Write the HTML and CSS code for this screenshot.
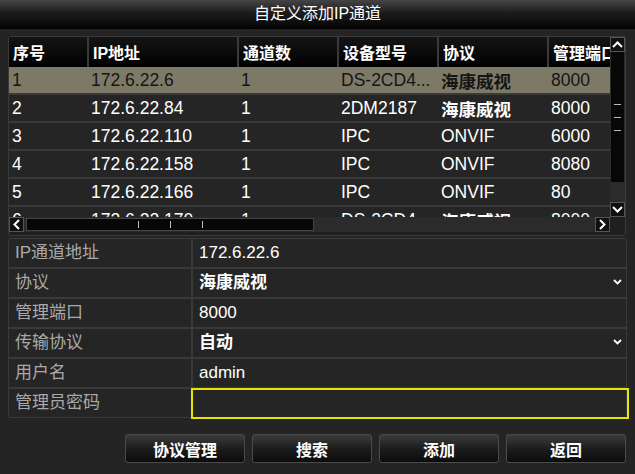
FILE: index.html
```html
<!DOCTYPE html>
<html lang="zh-CN">
<head>
<meta charset="UTF-8">
<title>自定义添加IP通道</title>
<link rel="stylesheet" href="styles.css">
</head>
<body>
<div class="dialog">
    <div class="titlebar">自定义添加IP通道</div>

    <!-- 搜索到的设备列表 -->
    <div class="grid-frame">
        <div class="grid-main">
            <div class="grid-view">
                <table class="grid">
                    <colgroup>
                        <col style="width:78px"><col style="width:150px"><col style="width:100px">
                        <col style="width:100px"><col style="width:110px"><col style="width:63px">
                    </colgroup>
                    <thead>
                        <tr><th>序号</th><th>IP地址</th><th>通道数</th><th>设备型号</th><th>协议</th><th>管理端口</th></tr>
                    </thead>
                    <tbody>
                        <tr class="selected"><td>1</td><td>172.6.22.6</td><td>1</td><td>DS-2CD4...</td><td class="bold">海康威视</td><td>8000</td></tr>
                        <tr><td>2</td><td>172.6.22.84</td><td>1</td><td>2DM2187</td><td class="bold">海康威视</td><td>8000</td></tr>
                        <tr><td>3</td><td>172.6.22.110</td><td>1</td><td>IPC</td><td>ONVIF</td><td>6000</td></tr>
                        <tr><td>4</td><td>172.6.22.158</td><td>1</td><td>IPC</td><td>ONVIF</td><td>8080</td></tr>
                        <tr><td>5</td><td>172.6.22.166</td><td>1</td><td>IPC</td><td>ONVIF</td><td>80</td></tr>
                        <tr><td>6</td><td>172.6.22.170</td><td>1</td><td>DS-2CD4...</td><td class="bold">海康威视</td><td>8000</td></tr>
                    </tbody>
                </table>
            </div>
            <div class="vscroll">
                <div class="sbtn">
                    <svg width="11" height="7" viewBox="0 0 11 7"><polyline points="1,6 5.5,1.5 10,6" fill="none" stroke="#fff" stroke-width="2"/></svg>
                </div>
                <div class="vtrack">
                    <div class="vthumb"><i></i><i></i><i></i></div>
                </div>
                <div class="sbtn">
                    <svg width="11" height="7" viewBox="0 0 11 7"><polyline points="1,1 5.5,5.5 10,1" fill="none" stroke="#fff" stroke-width="2"/></svg>
                </div>
            </div>
        </div>
        <div class="hscroll">
            <div class="sbtn">
                <svg width="7" height="11" viewBox="0 0 7 11"><polyline points="6,1 1.5,5.5 6,10" fill="none" stroke="#fff" stroke-width="2"/></svg>
            </div>
            <div class="htrack">
                <div class="hthumb"><i></i><i></i><i></i></div>
            </div>
            <div class="sbtn">
                <svg width="7" height="11" viewBox="0 0 7 11"><polyline points="1,1 5.5,5.5 1,10" fill="none" stroke="#fff" stroke-width="2"/></svg>
            </div>
        </div>
    </div>

    <!-- 通道参数 -->
    <div class="form">
        <div class="row"><div class="label">IP通道地址</div><div class="value">172.6.22.6</div></div>
        <div class="row"><div class="label">协议</div><div class="value bold">海康威视<span class="drop"><svg width="9" height="6" viewBox="0 0 9 6"><polyline points="1,1 4.5,4.5 8,1" fill="none" stroke="#fff" stroke-width="1.8"/></svg></span></div></div>
        <div class="row"><div class="label">管理端口</div><div class="value">8000</div></div>
        <div class="row"><div class="label">传输协议</div><div class="value bold">自动<span class="drop"><svg width="9" height="6" viewBox="0 0 9 6"><polyline points="1,1 4.5,4.5 8,1" fill="none" stroke="#fff" stroke-width="1.8"/></svg></span></div></div>
        <div class="row"><div class="label">用户名</div><div class="value">admin</div></div>
        <div class="row"><div class="label">管理员密码</div><div class="value focus"></div></div>
    </div>

    <div class="actions">
        <button>协议管理</button>
        <button>搜索</button>
        <button>添加</button>
        <button>返回</button>
    </div>
</div>
</body>
</html>
```

FILE: styles.css
```css
body{
    margin: 0;
    background: #232323;
}
.dialog{
    width: 635px;
    height: 474px;
    background: #242424;
    font-family: "Liberation Sans", Arial, "Noto Sans CJK SC", sans-serif;
    color: #fff;
    overflow: hidden;
}
.titlebar{
    height: 28px;
    line-height: 27px;
    text-align: center;
    font-size: 16px;
    background: linear-gradient(#454545, #1c1c1c 45%, #050505);
    border-bottom: 1px solid #000;
}
.bold{
    font-weight: bold;
}

/* 列表 */
.grid-frame{
    margin: 7px 0 0 8px;
    width: 616px;
    height: 198px;
    border: 1px solid #3a3a3a;
    border-radius: 3px;
    background: #1f1f1f;
}
.grid-main{
    display: flex;
    height: 180px;
}
.grid-view{
    width: 601px;
    height: 180px;
    overflow: hidden;
}
.grid{
    width: 601px;
    table-layout: fixed;
    border-collapse: separate;
    border-spacing: 0;
}
.grid th{
    box-sizing: border-box;
    height: 30px;
    padding: 0 0 0 4px;
    text-align: left;
    font-size: 16px;
    font-weight: bold;
    white-space: nowrap;
    overflow: hidden;
    background: linear-gradient(#151515, #000);
    border-left: 2px solid #3a3a3a;
}
.grid th:first-child{
    border-left: none;
}
.grid td{
    box-sizing: border-box;
    height: 28px;
    padding: 0 0 0 4px;
    font-size: 17.5px;
    white-space: nowrap;
    overflow: hidden;
    background: #252525;
    border-bottom: 2px solid #3a3a3a;
}
.grid td:first-child{
    padding-left: 3px;
}
.grid tr.selected td{
    background: #7c7a67;
    color: #151515;
}
.vscroll{
    width: 15px;
    display: flex;
    flex-direction: column;
    background: #2b2b2b;
}
.sbtn{
    width: 15px;
    height: 15px;
    flex: none;
    display: flex;
    align-items: center;
    justify-content: center;
    background: #101010;
    border: 1px solid #555;
    box-sizing: border-box;
}
.vtrack{
    flex: 1;
    padding: 0 1px;
}
.vthumb{
    height: 130px;
    background: #070707;
    display: flex;
    flex-direction: column;
    align-items: center;
    justify-content: center;
    gap: 12px;
}
.vthumb i{
    width: 7px;
    height: 1px;
    background: #bbb;
}
.hscroll{
    display: flex;
    height: 15px;
    width: 601px;
}
.htrack{
    flex: 1;
    padding: 1px 2px;
    background: #2b2b2b;
}
.hthumb{
    width: 288px;
    height: 13px;
    box-sizing: border-box;
    background: #070707;
    border: 1px solid #444;
    display: flex;
    align-items: center;
    justify-content: center;
    gap: 31px;
}
.hthumb i{
    width: 1px;
    height: 7px;
    background: #bbb;
}

/* 参数表单 */
.form{
    margin: 2px 0 0 8px;
    width: 617px;
    border: 1px solid #3a3a3a;
    border-radius: 3px;
    background: #252525;
}
.row{
    display: flex;
    height: 30px;
    border-top: 2px solid #3a3a3a;
    box-sizing: border-box;
}
.row:first-child{
    height: 28px;
    border-top: none;
}
.label{
    width: 184px;
    padding-left: 6px;
    box-sizing: border-box;
    border-right: 2px solid #3a3a3a;
    color: #a9a9a9;
    font-size: 17px;
    line-height: 28px;
}
.value{
    flex: 1;
    position: relative;
    padding-left: 6px;
    font-size: 17px;
    line-height: 28px;
}
.drop{
    position: absolute;
    right: 4px;
    top: 10px;
    line-height: 0;
}
.value.focus{
    margin: -1px -3px -2px -2px;
    border: 2px solid #e6e600;
}

/* 按钮 */
.actions{
    display: flex;
    justify-content: flex-end;
    gap: 7px;
    padding: 16px 9px 0 0;
}
.actions button{
    width: 120px;
    height: 29px;
    font-family: "Noto Sans CJK SC", sans-serif;
    font-size: 16px;
    font-weight: bold;
    color: #fff;
    background: linear-gradient(#3c3c3c, #1a1a1a 55%, #0c0c0c);
    border: 1px solid #4a4a4a;
    border-radius: 3px;
}
```
